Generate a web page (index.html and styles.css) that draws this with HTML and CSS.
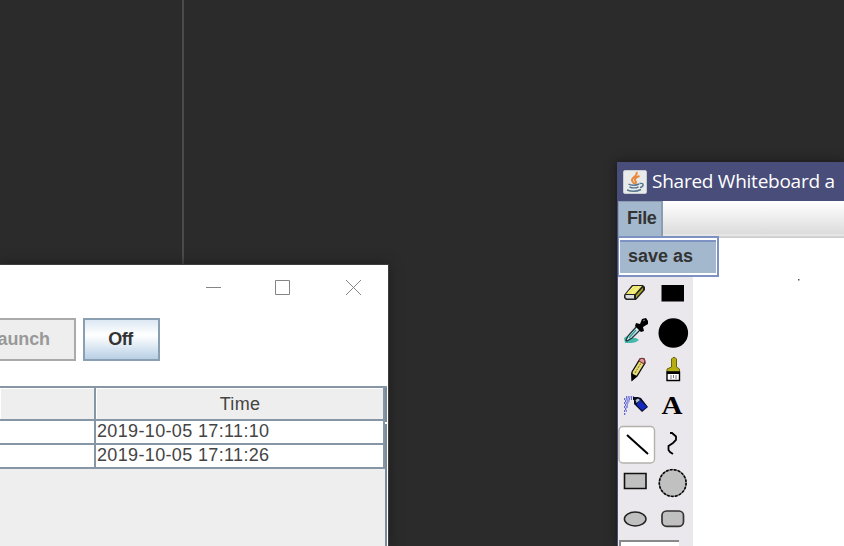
FILE: index.html
```html
<!DOCTYPE html>
<html lang="en">
<head>
<meta charset="utf-8">
<title>Shared Whiteboard</title>
<link rel="stylesheet" href="styles.css">
</head>
<body>
<main class="desktop">
  <div class="divider"></div>

  <section class="window manager">
    <header class="caption">
      <svg width="16" height="16" viewBox="0 0 16 16"><path d="M1 8.500H16"/></svg>
      <svg width="16" height="16" viewBox="0 0 16 16"><path d="M.5 1.500H14.500V15.500H.5Z"/></svg>
      <svg width="16" height="16" viewBox="0 0 16 16"><path d="M1 1L16 16M16 1L1 16"/></svg>
    </header>
    <div class="actions">
      <button class="btn launch" disabled><span>aunch</span></button>
      <button class="btn off"><span>Off</span></button>
    </div>
    <div class="scroll">
      <div class="grid">
        <div class="cell head"></div><div class="cell head time"><span>Time</span></div>
        <div class="cell"></div><div class="cell"><span>2019-10-05 17:11:10</span></div>
        <div class="cell"></div><div class="cell"><span>2019-10-05 17:11:26</span></div>
      </div>
      <div class="track"></div>
    </div>
  </section>

  <section class="window board">
    <header class="titlebar">
      <svg width="24" height="24" viewBox="0 0 24 24">
        <rect x=".5" y=".5" width="23" height="23" rx="1.500" fill="#e9eaea" stroke="#c9cbd2"/>
        <path d="M13.500 2C15.500 6 8 7.500 9 10.500C9.500 12 11 12.500 11 14M16.500 6C12 7.500 11 9.500 12.500 11C14 12.500 12.500 13 12 14" fill="none" stroke="#e8883a" stroke-width="2"/>
        <path d="M5.500 14C8 15.800 13 15.500 16 14M6.500 17C9 18 13 18 15.500 17M4 20C8 21.500 14 21.500 18 19.500M16.500 13.500C22 12.500 20.500 17 17 17.500" fill="none" stroke="#557590" stroke-width="1.400"/>
      </svg>
      <span>Shared Whiteboard a</span>
    </header>
    <nav class="menubar"><div class="menu"><span>File</span></div>
      <div class="popup"><div class="item"><span>save as</span></div></div>
    </nav>
    <div class="content">
      <div class="tools">
        <svg viewBox="618 274 37 38">
          <path d="M624 295L632 285H643L645 287V290L636 300H626L624 298Z" fill="#222"/>
          <path d="M626 294L633 286H642L635 294Z" fill="#eee96d"/>
          <path d="M625.500 295H634V298.500H627L625.500 297.500Z" fill="#ddd"/>
          <path d="M636 295L643 287.500V290L636 298Z" fill="#aaa51e"/>
          <path d="M628 292L633 287M632 293L639 287" stroke="#fff" stroke-width=".8" stroke-dasharray="1 1"/>
        </svg>
        <svg viewBox="655 274 38 38"><path d="M661.500 285H684V301.500H661.500Z"/></svg>

        <svg viewBox="618 312 37 38">
          <path d="M624 338L627 336L630 338H636L639 340L636 342L632 343H625Z" fill="#45b9ac"/>
          <path d="M626 340L628 336L637 326L641 329L632 338L627 341Z" fill="#d5eaec" stroke="#203238" stroke-width="1.300"/>
          <path d="M629 338L636 330" stroke="#2aa49d" stroke-width="1.300"/>
          <path d="M636 323L640 324L642 319L646 318L648 321V324L643 327L644 331L641 332L635 326Z"/>
          <path d="M643 321L645 320" stroke="#888"/>
        </svg>
        <svg viewBox="655 312 38 38"><circle cx="673.300" cy="333" r="14.800"/></svg>

        <svg viewBox="618 350 37 38">
          <path d="M632 372L640 359H644L645 363L637 376L632 380Z" fill="#e9df76" stroke="#111" stroke-width="1.400"/>
          <path d="M639.500 359.500L642 358L645 360L644 364L639 361Z" fill="#d99" stroke="#7c2930"/>
          <path d="M635 373L641 363" stroke="#665f2b" stroke-dasharray="2 1"/>
          <path d="M631 373L637 376L632 381Z"/>
        </svg>
        <svg viewBox="655 350 38 38">
          <path d="M671.500 359L673 357.500H675L676.500 359V367L679.500 369V372H667V369L671.500 367Z" fill="#b7ad13" stroke="#67640a"/>
          <path d="M667 372H679.500V380.500H667Z" fill="#fff" stroke="#000" stroke-width="1.400"/>
          <path d="M667 373H680" stroke="#000" stroke-width="2"/>
          <path d="M671 375V379M673.500 375V378M676 375V379" stroke="#555" stroke-width=".8"/>
        </svg>

        <svg viewBox="618 388 37 38">
          <path d="M626 397H634M624 399H632M625 401H630M624 403H629M625 405H628M624 407H628M625 409H627M624 411H627M624 414H626" stroke="#353dcb" stroke-width="1.400" stroke-dasharray="1.300 1"/>
          <path d="M633 397H638L641 398L648 407L642 412L634 404V400H633Z" fill="#080c20"/>
          <path d="M640 400L647 407L642 410.500L636.500 404.500Z" fill="#1428c0"/>
          <path d="M635.500 400L638 398.500L640 400L636.500 403Z" fill="#b5c2cf"/>
        </svg>
        <svg viewBox="655 388 38 38"><text class="letter" x="661.500" y="414" textLength="21" lengthAdjust="spacingAndGlyphs">A</text></svg>

        <svg viewBox="618 426 37 38">
          <rect x="619" y="426.500" width="35.500" height="36.500" rx="4" fill="#fff" stroke="#b4b1ad" stroke-width="1.400"/>
          <path d="M627 435L648 454" stroke="#000" stroke-width="2"/>
        </svg>
        <svg viewBox="655 426 38 38"><path d="M670 433H672L676 436.500V440L673 443L668.500 446V450L670 452L673 454" fill="none" stroke="#000" stroke-width="1.800"/></svg>

        <svg viewBox="618 464 37 38"><path d="M624.500 473.500H646V488.500H624.500Z" fill="#c0c0c0" stroke="#111" stroke-width="1.600"/></svg>
        <svg viewBox="655 464 38 38"><circle cx="672.700" cy="483" r="13.400" fill="#c0c0c0" stroke="#666" stroke-width="1.400"/><circle cx="672.700" cy="483" r="13.400" fill="none" stroke="#000" stroke-width="1.500" stroke-dasharray="2.500 1.500"/></svg>

        <svg viewBox="618 502 37 38"><ellipse cx="635.200" cy="519" rx="10.800" ry="6.900" fill="#c0c0c0" stroke="#222" stroke-width="1.500"/></svg>
        <svg viewBox="655 502 38 38"><rect x="662" y="511" width="21.500" height="15.300" rx="4.500" fill="#c0c0c0" stroke="#333" stroke-width="1.700"/></svg>
        <div class="options"></div>
      </div>
      <div class="canvas"><svg width="151" height="308" viewBox="693 238 151 308"><path d="M798 279H799.500V280.500H798Z" fill="#555"/></svg></div>
    </div>
  </section>
</main>
</body>
</html>
```
FILE: styles.css
```css
* { box-sizing: border-box; }
body { margin: 0; font-family: "Liberation Sans", Arial, sans-serif; }
.desktop { position: relative; width: 844px; height: 546px; overflow: hidden; background: #2b2b2b; }
.divider { position: absolute; left: 182px; top: 0; width: 2px; height: 265px; background: #4b4b4b; }
.window { position: absolute; display: flex; flex-direction: column; }
svg { display: block; flex: none; }
span { white-space: nowrap; }

.manager { left: 0; top: 265px; width: 388px; height: 281px; background: #fff; box-shadow: 0 0 0 1px #3d3d3d, 0 0 12px #1b1b1b; }
.caption { display: flex; justify-content: flex-end; gap: 54px; height: 53px; padding: 14px 27px 0 0; }
.caption svg { fill: none; stroke: #858585; stroke-width: 1; }
.actions { display: flex; gap: 7px; height: 68px; }
.btn { height: 43px; padding: 0; border: 2px solid #8b9fb2; font: bold 18px "Liberation Sans", Arial, sans-serif; color: #333; }
.launch { display: flex; justify-content: flex-end; align-items: center; width: 76px; padding-right: 24px; border-color: #aaa; border-left: 0; background: #eee; color: #999; }
.launch span { letter-spacing: -.1px; }
.off { width: 77px; background: linear-gradient(#dce8f3, #fff 38%, #f5f9fc 48%, #b8cfe5); }
.off span { letter-spacing: -.5px; margin-right: 2px; }

.scroll { display: flex; flex: 1; width: 387px; background: #eee; border-top: 2px solid #8796a4; }
.grid { display: grid; grid-template-columns: 96px 289px; grid-template-rows: 33px 24px 24px; width: 385px; }
.cell { border-right: 2px solid #8796a4; border-bottom: 2px solid #8796a4; background: #fff; padding-left: 1px; font-size: 18px; line-height: 21px; color: #444; }
.cell span { letter-spacing: .35px; }
.cell.head { background: #eee; box-shadow: inset 1px 1px #fff; line-height: 32px; text-align: center; }
.track { width: 2px; background: linear-gradient(#7a8a99 34px, #fff 34px, #fff 36px, #7a8a99 36px); }

.board { left: 617px; top: 162px; width: 227px; height: 384px; padding-left: 1px; background: #494d79; box-shadow: 0 0 9px #171717; }
.titlebar { display: flex; align-items: center; gap: 5px; height: 39px; padding-left: 5px; color: #fff; font: 19px "Open Sans", "Noto Sans", sans-serif; }
.titlebar span { letter-spacing: -.25px; position: relative; top: -1px; }
.menubar { position: relative; z-index: 1; height: 37px; background: linear-gradient(#fff, #dcdcdc 33px, #eee 34px, #ccc 36px); }
.menu { width: 45px; height: 35px; padding: 5px 0 0 8px; background: #a3b8cc; border: solid #8a9cb0; border-width: 1px 2px 0 1px; color: #333; font-weight: bold; font-size: 18px; line-height: 22px; }
.menu span { letter-spacing: -.4px; }
.popup { position: absolute; left: 0; top: 35px; width: 101px; height: 41px; padding: 2px 1px; border: 2px solid #7d92c3; border-left-width: 1px; background: #fff; }
.item { height: 33px; padding-left: 8px; border-top: 2px solid #7d92c3; background: #a3b8cc; color: #333; font-weight: bold; font-size: 18px; line-height: 29px; }
.content { display: flex; flex: 1; }
.tools { display: grid; grid-template-columns: 37px 38px; grid-template-rows: repeat(7, 38px) 6px; width: 75px; padding-top: 36px; background: #ebe8ed; }
.tools svg { width: 100%; height: 38px; overflow: visible; }
.letter { font: bold 26px "Liberation Serif", "Times New Roman", serif; }
.options { width: 60px; height: 6px; margin-left: 1px; border: solid #8a8888; border-width: 2px 0 0 2px; background: #fff; }
.canvas { width: 151px; background: #fff; }
```
